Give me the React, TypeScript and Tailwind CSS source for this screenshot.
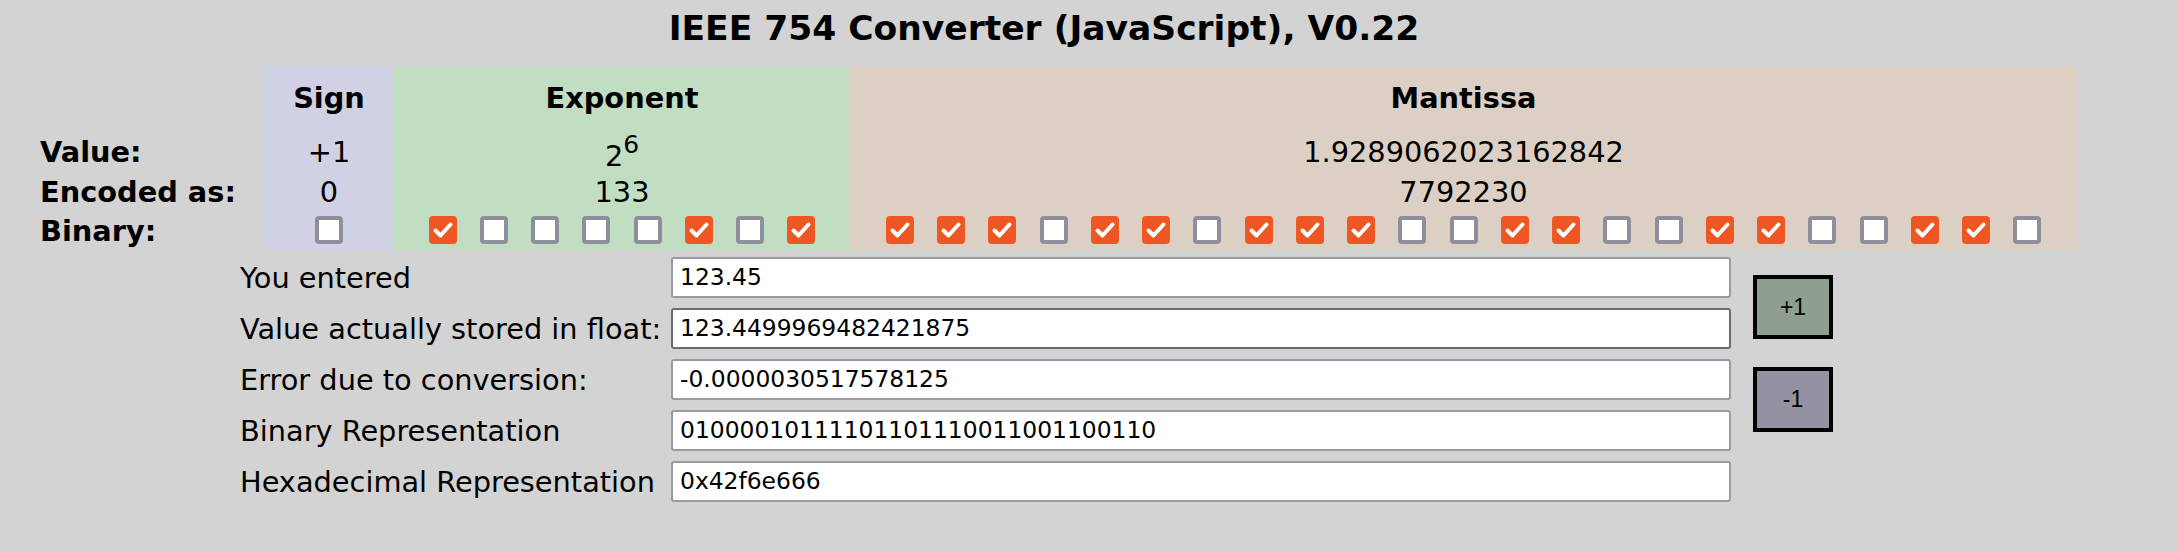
const SIGN_BITS = "0";
const EXPONENT_BITS = "10000101";
const MANTISSA_BITS = "11101101110011001100110";

const fields = [
  { label: "You entered", value: "123.45", focused: false },
  { label: "Value actually stored in float:", value: "123.4499969482421875", focused: true },
  { label: "Error due to conversion:", value: "-0.0000030517578125", focused: false },
  { label: "Binary Representation", value: "01000010111101101110011001100110", focused: false },
  { label: "Hexadecimal Representation", value: "0x42f6e666", focused: false },
];

function BitBox({ checked }: { checked: boolean }) {
  if (checked) {
    return (
      <span className="flex h-[28px] w-[28px] shrink-0 items-center justify-center rounded-[4px] bg-[#ee5624]">
        <svg width="28" height="28" viewBox="0 0 28 28" fill="none">
          <path d="M6.5 14.5 L11.5 19.5 L21.5 8.5" stroke="#ffffff" strokeWidth="4" strokeLinecap="round" strokeLinejoin="round" />
        </svg>
      </span>
    );
  }
  return <span className="block h-[28px] w-[28px] shrink-0 rounded-[4px] border-[4px] border-[#8f8e9c] bg-white" />;
}

function Bits({ bits }: { bits: string }) {
  return (
    <div className="flex justify-center gap-[23.25px] pt-[4px]">
      {bits.split("").map((b, i) => (
        <BitBox key={i} checked={b === "1"} />
      ))}
    </div>
  );
}

function Column({
  title,
  value,
  encoded,
  bits,
  className,
}: {
  title: string;
  value: React.ReactNode;
  encoded: string;
  bits: string;
  className: string;
}) {
  return (
    <div className={`flex flex-col text-center ${className}`}>
      <div className="h-[66px] pt-[16px] font-bold leading-[32px]">{title}</div>
      <div className="h-[40px] leading-[40px]">{value}</div>
      <div className="h-[40px] leading-[40px]">{encoded}</div>
      <div className="h-[38px]">
        <Bits bits={bits} />
      </div>
    </div>
  );
}

export default function App() {
  return (
    <div
      className="min-h-[552px] w-full bg-[#d3d3d3] text-black"
      style={{ fontFamily: '"DejaVu Sans", Verdana, sans-serif' }}
    >
      <h2 className="w-[2088px] pt-[8px] text-center text-[34.5px] font-bold leading-[40px]">
        IEEE 754 Converter (JavaScript), V0.22
      </h2>

      <div className="mt-[18px] flex text-[28.8px]">
        <div className="flex w-[264px] flex-col pl-[40px] font-bold">
          <div className="h-[66px]" />
          <div className="h-[40px] leading-[40px]">Value:</div>
          <div className="h-[40px] leading-[40px]">Encoded as:</div>
          <div className="h-[38px] leading-[38px]">Binary:</div>
        </div>
        <Column title="Sign" value="+1" encoded="0" bits={SIGN_BITS} className="w-[130px] bg-[#d1d1e5]" />
        <Column
          title="Exponent"
          value={
            <span className="relative top-[4px]">
              2<span className="relative -top-[13px] text-[25px]">6</span>
            </span>
          }
          encoded="133"
          bits={EXPONENT_BITS}
          className="w-[456px] bg-[#c1ddc2]"
        />
        <Column
          title="Mantissa"
          value="1.9289062023162842"
          encoded="7792230"
          bits={MANTISSA_BITS}
          className="w-[1227px] bg-[#dcd0c5]"
        />
      </div>

      <div className="mt-[7px] flex pl-[240px]">
        <div className="flex flex-col gap-[10px]">
          {fields.map((f) => (
            <div key={f.label} className="flex items-center">
              <span className="w-[431px] whitespace-nowrap text-[28.8px] leading-[32px]">{f.label}</span>
              <div
                className={`flex h-[41px] w-[1060px] items-center rounded-[3px] border-2 bg-white pl-[7px] text-[23.4px] ${
                  f.focused ? "border-[#6c6b76]" : "border-[#9a99a6]"
                }`}
              >
                {f.value}
              </div>
            </div>
          ))}
        </div>
        <div
          className="ml-[22px] flex flex-col gap-[28px] pt-[18px] text-[23px]"
          style={{ fontFamily: '"Liberation Sans", Arial, sans-serif' }}
        >
          <button className="flex h-[64px] w-[80px] items-center justify-center border-[4px] border-black bg-[#8f9f8f]">
            +1
          </button>
          <button className="flex h-[65px] w-[80px] items-center justify-center border-[4px] border-black bg-[#9391a2]">
            -1
          </button>
        </div>
      </div>
    </div>
  );
}
